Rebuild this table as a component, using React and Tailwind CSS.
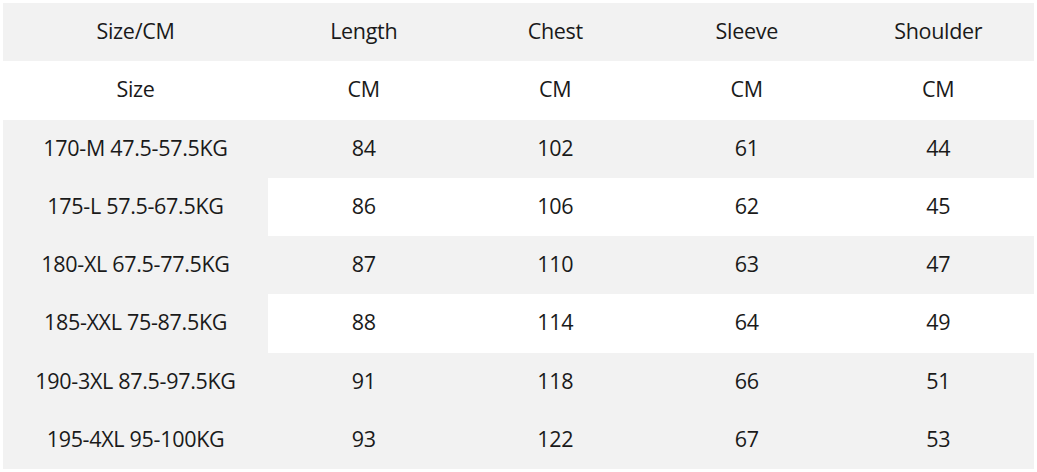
import React from "react";

const headers = ["Size/CM", "Length", "Chest", "Sleeve", "Shoulder"];
const units = ["Size", "CM", "CM", "CM", "CM"];

// size rows; the "shaded" flag is for the value cells, the size column is always grey
const rows = [
  { size: "170-M 47.5-57.5KG", values: [84, 102, 61, 44], shaded: true },
  { size: "175-L 57.5-67.5KG", values: [86, 106, 62, 45], shaded: false },
  { size: "180-XL 67.5-77.5KG", values: [87, 110, 63, 47], shaded: true },
  { size: "185-XXL 75-87.5KG", values: [88, 114, 64, 49], shaded: false },
  { size: "190-3XL 87.5-97.5KG", values: [91, 118, 66, 51], shaded: true },
  { size: "195-4XL 95-100KG", values: [93, 122, 67, 53], shaded: true },
];

const Cell = ({ children, grey }) => (
  <div
    className={`flex items-center justify-center pb-[2px] ${
      grey ? "bg-[#f2f2f2]" : "bg-white"
    }`}
  >
    {children}
  </div>
);

export default function App() {
  return (
    <div
      className="w-[1037px] h-[472px] bg-white p-[3px] text-[#1a1a1a] text-[21.5px] tracking-[-0.3px]"
      style={{ fontFamily: '"Open Sans", "Noto Sans", sans-serif' }}
    >
      <div className="grid h-full grid-cols-[265px_repeat(4,1fr)] grid-rows-8">
        {headers.map((h) => (
          <Cell key={h} grey>
            {h}
          </Cell>
        ))}
        {units.map((u, i) => (
          <Cell key={"u" + i}>{u}</Cell>
        ))}
        {rows.map((r) => (
          <React.Fragment key={r.size}>
            <Cell grey>{r.size}</Cell>
            {r.values.map((v, i) => (
              <Cell key={i} grey={r.shaded}>
                {v}
              </Cell>
            ))}
          </React.Fragment>
        ))}
      </div>
    </div>
  );
}
